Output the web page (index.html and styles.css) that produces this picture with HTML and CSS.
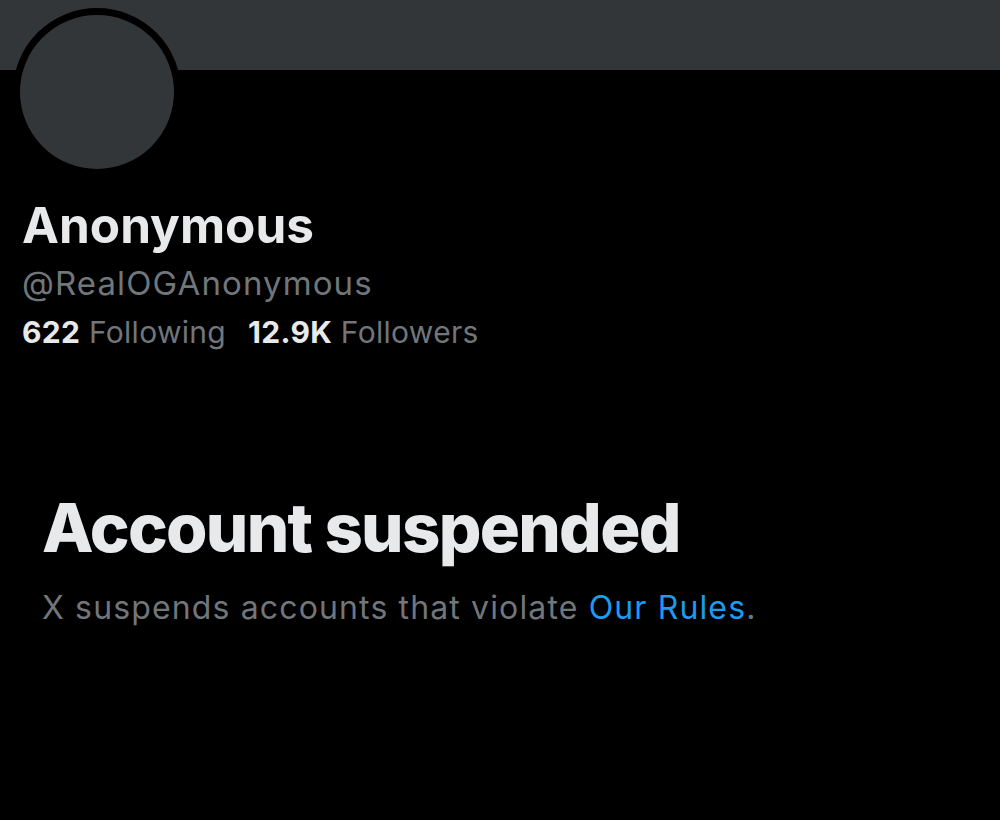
FILE: index.html
```html
<!DOCTYPE html>
<html>
<head>
<meta charset="utf-8">
<link rel="stylesheet" href="styles.css">
</head>
<body>
<div class="page">
  <div class="banner"></div>
  <div class="profile">
    <div class="avatar"></div>
    <div class="name">Anonymous</div>
    <div class="handle">@RealOGAnonymous</div>
    <div class="stats">
      <span class="stat"><b>622</b> Following</span>
      <span class="stat"><b>12.9K</b> Followers</span>
    </div>
  </div>
  <div class="suspended">
    <h1 class="title">Account suspended</h1>
    <p class="desc">X suspends accounts that violate <a class="link" href="#">Our Rules</a>.</p>
  </div>
</div>
</body>
</html>
```
FILE: styles.css
```css
html, body {
  margin: 0;
  padding: 0;
  background: #000;
  height: 100%;
}
.page {
  font-family: Inter, "Liberation Sans", sans-serif;
  color: #e7e9ea;
  min-height: 820px;
  background: #000;
}
.banner {
  height: 70px;
  background: #333639;
}
.profile {
  padding-left: 22px;
}
.avatar {
  width: 154px;
  height: 154px;
  border-radius: 50%;
  background: #333639;
  border: 7px solid #000;
  margin-top: -62px;
  margin-left: -9px;
}
.name {
  margin-top: 21px;
  font-size: 49.5px;
  font-weight: 700;
  line-height: 56px;
}
.handle {
  margin-top: 10px;
  font-size: 33px;
  line-height: 40px;
  letter-spacing: 1.1px;
  color: #71767b;
}
.stats {
  display: flex;
  gap: 22px;
  margin-top: 11px;
  font-size: 30px;
  line-height: 36px;
  letter-spacing: 0.3px;
  color: #71767b;
}
.stat b {
  color: #e7e9ea;
  font-weight: 700;
}
.suspended {
  padding: 0 42px;
  margin-top: 138px;
}
.title {
  margin: 0;
  font-size: 67px;
  line-height: 80px;
  font-weight: 800;
  letter-spacing: -1.7px;
  color: #e7e9ea;
}
.desc {
  margin: 20px 0 0;
  font-size: 32px;
  line-height: 40px;
  letter-spacing: 1.14px;
  color: #71767b;
}
.link {
  color: #1d9bf0;
  text-decoration: none;
}
```
